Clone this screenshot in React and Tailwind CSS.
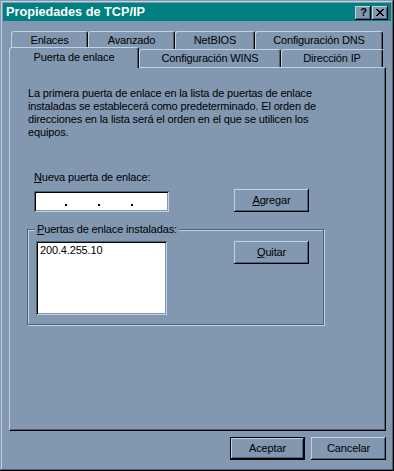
import React from "react";

const raised =
  "shadow-[inset_-1px_-1px_0_#000,inset_1px_1px_0_#c3d3e3,inset_-2px_-2px_0_#4f6275]";
const sunken =
  "shadow-[inset_1px_1px_0_#4f6275,inset_-1px_-1px_0_#c3d3e3,inset_2px_2px_0_#000,inset_-2px_-2px_0_#8297b0]";

function Tab({ children, w, selected, back }) {
  return (
    <div
      className={
        "flex justify-center bg-[#8297b0] border-l border-t border-r border-l-[#c3d3e3] border-t-[#c3d3e3] border-r-black rounded-tl-[3px] rounded-tr-[3px] shadow-[inset_-1px_0_0_#4f6275] whitespace-nowrap " +
        (selected
          ? "relative z-10 h-[21px] -mb-px items-center pb-[2px]"
          : back
          ? "h-[18px] items-center"
          : "h-[18px] items-center")
      }
      style={{ width: w }}
    >
      {children}
    </div>
  );
}

function Button({ children, def, className = "" }) {
  if (def) {
    return (
      <div className={"w-[75px] h-[23px] border border-black " + className}>
        <div className={"w-full h-full flex items-center justify-center bg-[#8297b0] " + raised}>
          {children}
        </div>
      </div>
    );
  }
  return (
    <div
      className={
        "w-[75px] h-[23px] flex items-center justify-center bg-[#8297b0] " + raised + " " + className
      }
    >
      {children}
    </div>
  );
}

export default function App() {
  return (
    <div
      className="w-[394px] h-[471px] bg-[#8297b0] p-[3px] flex flex-col text-black text-[11px] leading-[13px] tracking-[-0.15px] shadow-[inset_-1px_-1px_0_#000,inset_1px_1px_0_#8297b0,inset_-2px_-2px_0_#4f6275,inset_2px_2px_0_#c3d3e3]"
      style={{ fontFamily: '"Liberation Sans", Arial, sans-serif' }}
    >
      {/* Title bar */}
      <div className="h-[18px] bg-[#008080] flex items-center justify-between pl-[3px] pr-[3px]">
        <span className="text-white font-bold text-[12.7px] tracking-normal">Propiedades de TCP/IP</span>
        <div className="flex gap-[1px] mt-[1px]">
          <div className={"w-[16px] h-[14px] flex items-center justify-center bg-[#8297b0] " + raised}>
            <span className="font-bold text-[11px] leading-none pb-[1px] pl-[1px]">?</span>
          </div>
          <div className={"w-[16px] h-[14px] flex items-center justify-center bg-[#8297b0] " + raised}>
            <svg width="8" height="7" viewBox="0 0 8 7" shapeRendering="crispEdges">
              <path d="M0 0h2v1h-2zM6 0h2v1h-2zM1 1h2v1h-2zM5 1h2v1h-2zM2 2h4v1h-4zM3 3h2v1h-2zM2 4h4v1h-4zM1 5h2v1h-2zM5 5h2v1h-2zM0 6h2v1h-2zM6 6h2v1h-2z" fill="#000" />
            </svg>
          </div>
        </div>
      </div>

      {/* Tabs */}
      <div className="mt-[10px] ml-[6px] w-[377px]">
        <div className="flex pl-[2px]">
          <Tab w={77} back>Enlaces</Tab>
          <Tab w={87} back>Avanzado</Tab>
          <Tab w={80} back>NetBIOS</Tab>
          <Tab w={128} back>Configuración DNS</Tab>
        </div>
        <div className="flex items-end h-[18px]">
          <Tab w={130} selected>Puerta de enlace</Tab>
          <Tab w={142}>Configuración WINS</Tab>
          <Tab w={102}>Dirección IP</Tab>
        </div>

        {/* Panel */}
        <div className="h-[364px] border border-t-[#c3d3e3] border-l-[#c3d3e3] border-r-black border-b-black shadow-[inset_-1px_-1px_0_#4f6275] pl-[18px] pt-[19px]">
          <p className="whitespace-nowrap">
            La primera puerta de enlace en la lista de puertas de enlace
            <br />
            instaladas se establecerá como predeterminado. El orden de
            <br />
            direcciones en la lista será el orden en el que se utilicen los
            <br />
            equipos.
          </p>

          <div className="mt-[32px] ml-[6px]">
            <span className="underline">N</span>ueva puerta de enlace:
          </div>

          <div className="flex items-start mt-[5px]">
            <div className={"ml-[6px] mt-[2px] w-[135px] h-[21px] bg-white flex items-start pt-[13px] pl-[31px] gap-[31px] " + sunken}>
              <span className="w-[2px] h-[2px] bg-black" />
              <span className="w-[2px] h-[2px] bg-black" />
              <span className="w-[2px] h-[2px] bg-black" />
            </div>
            <Button className="ml-[65px]">
              <span><span className="underline">A</span>gregar</span>
            </Button>
          </div>

          {/* Group box */}
          <div className="relative mt-[17px] -ml-px w-[297px] h-[96px] border border-[#4f6275] shadow-[1px_1px_0_#c3d3e3,inset_1px_1px_0_#c3d3e3]">
            <span className="absolute -top-[7px] left-[7px] px-[2px] bg-[#8297b0] whitespace-nowrap">
              <span className="underline">P</span>uertas de enlace instaladas:
            </span>
            <div className="flex items-start pt-[11px] pl-[8px]">
              <div className={"w-[131px] h-[74px] bg-white pl-[4px] pt-[3px] " + sunken}>
                200.4.255.10
              </div>
              <Button className="ml-[67px]">
                <span><span className="underline">Q</span>uitar</span>
              </Button>
            </div>
          </div>
        </div>
      </div>

      {/* Bottom buttons */}
      <div className="flex justify-end gap-[6px] mt-[6px] pr-[5px]">
        <Button def>Aceptar</Button>
        <Button>Cancelar</Button>
      </div>
    </div>
  );
}
